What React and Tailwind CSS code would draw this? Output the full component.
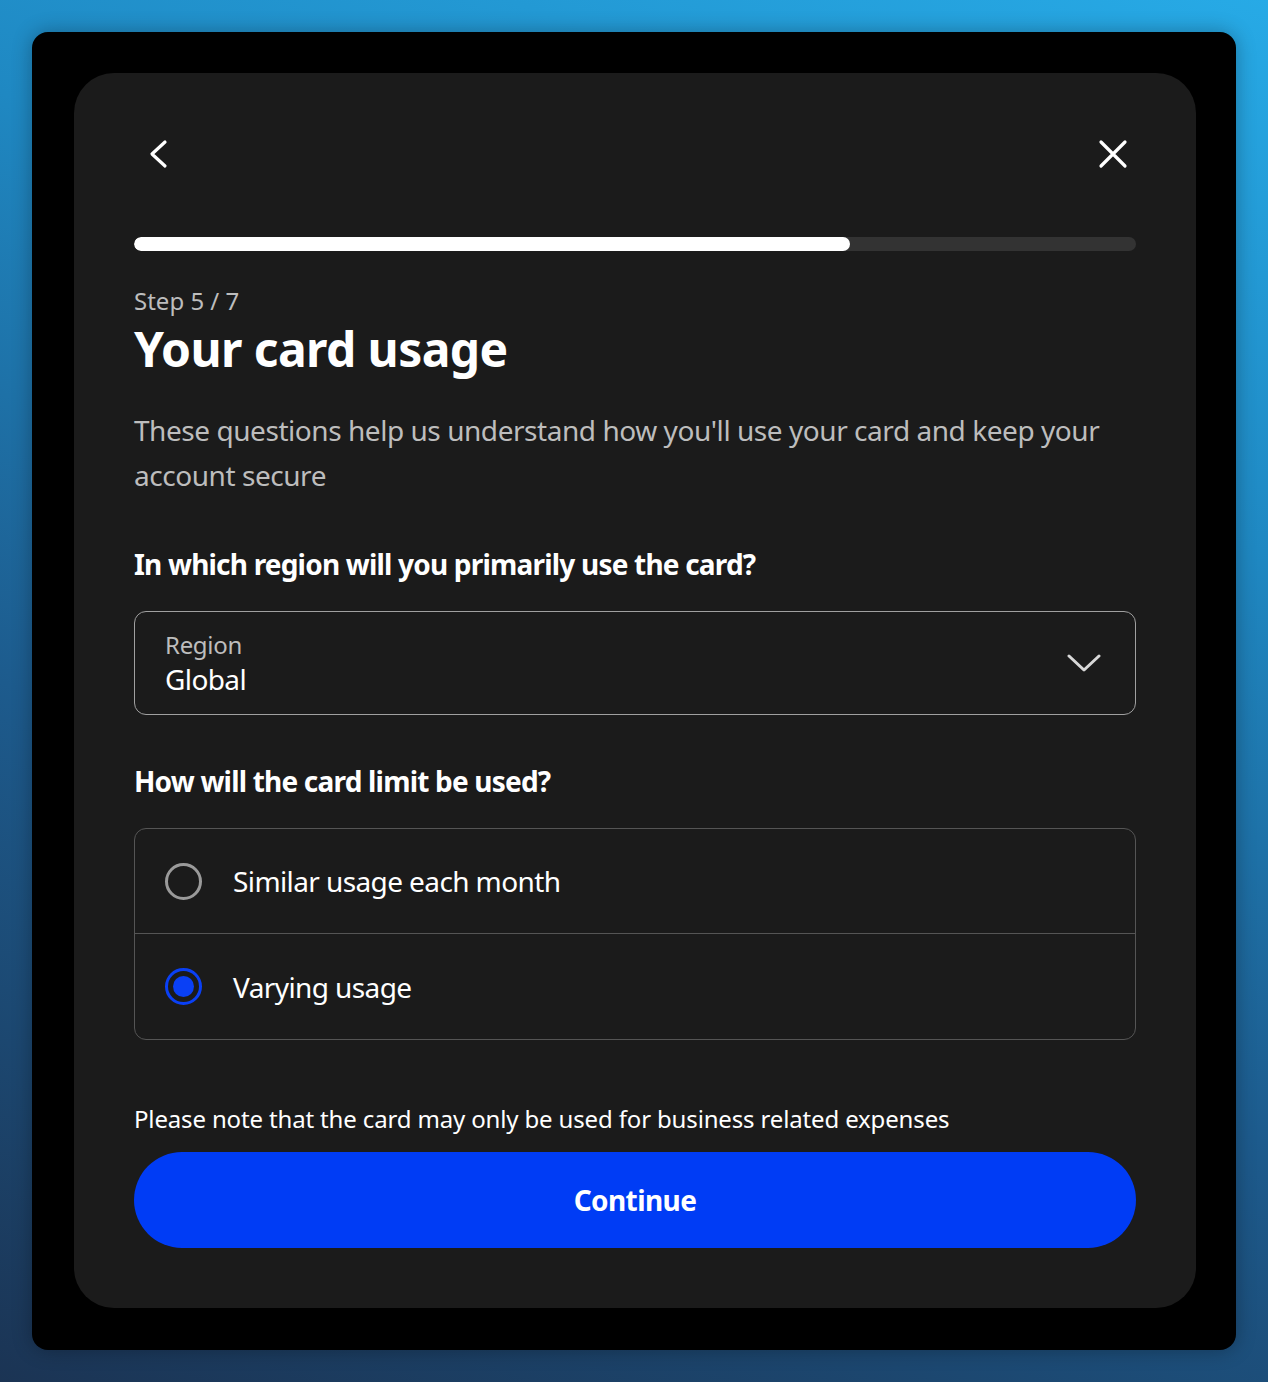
import React from "react";

export default function App() {
  return (
    <div
      className="w-[1268px] h-[1382px] p-8 bg-[linear-gradient(200deg,#27aae6_0%,#1f88c2_30%,#1d5b8d_62%,#1b3454_100%)]"
      style={{ fontFamily: '"Noto Sans", "Open Sans", sans-serif' }}
    >
      <div className="w-full h-full bg-black rounded-[16px] pl-[42px] pr-[40px] pt-[41px] pb-[42px] shadow-[0_0_20px_rgba(0,0,0,0.3)]">
        <div className="w-full h-full bg-[#1b1b1b] rounded-[40px] px-[60px] pt-[64px] flex flex-col">
          <div className="flex items-center justify-between h-[34px]">
            <svg width="20" height="30" viewBox="0 0 20 30" className="ml-[14px]">
              <path d="M17 3 L4 15 L17 27" fill="none" stroke="white" strokeWidth="3.2" strokeLinecap="round" strokeLinejoin="round" />
            </svg>
            <svg width="30" height="30" viewBox="0 0 30 30" className="mr-[8px]">
              <path d="M3 3 L27 27 M27 3 L3 27" fill="none" stroke="white" strokeWidth="3.2" strokeLinecap="round" />
            </svg>
          </div>
          <div className="mt-[66px] h-[14px] w-full rounded-full bg-[#333333] overflow-hidden">
            <div className="h-full bg-white rounded-full" style={{ width: `${(5 / 7) * 100}%` }} />
          </div>
          <div className="mt-[34px] text-[24px] leading-[32px] text-[#bdbdbd]">Step 5 / 7</div>
          <h1 className="text-[48px] leading-[56px] font-bold text-white mt-[4px] tracking-[-0.6px]">Your card usage</h1>
          <p className="mt-[31px] text-[28px] leading-[45px] text-[#bdbdbd] tracking-[-0.45px]">
            These questions help us understand how you'll use your card and keep your account secure
          </p>
          <h2 className="mt-[46px] text-[28px] leading-[40px] font-bold text-white tracking-[-0.8px]">
            In which region will you primarily use the card?
          </h2>
          <div className="mt-[27px] h-[104px] rounded-[12px] border border-[#a0a0a0] flex items-center justify-between pl-[30px] pr-[34px]">
            <div className="flex flex-col">
              <span className="text-[24px] leading-[32px] text-[#bdbdbd] tracking-[-0.3px]">Region</span>
              <span className="text-[28px] leading-[36px] text-white tracking-[-0.6px]">Global</span>
            </div>
            <svg width="34" height="20" viewBox="0 0 34 20">
              <path d="M2 3 L17 17 L32 3" fill="none" stroke="#d8d8d8" strokeWidth="3" strokeLinecap="round" strokeLinejoin="round" />
            </svg>
          </div>
          <h2 className="mt-[46px] text-[28px] leading-[40px] font-bold text-white tracking-[-0.8px]">
            How will the card limit be used?
          </h2>
          <div className="mt-[27px] rounded-[12px] border border-[#555555] flex flex-col">
            <div className="h-[105px] flex items-center pl-[30px] gap-[31px] border-b border-[#555555]">
              <span className="w-[37px] h-[37px] rounded-full border-[3px] border-[#9a9a9a] shrink-0" />
              <span className="text-[28px] leading-[36px] text-white tracking-[-0.6px]">Similar usage each month</span>
            </div>
            <div className="h-[105px] flex items-center pl-[30px] gap-[31px]">
              <span className="w-[37px] h-[37px] rounded-full border-[3px] border-[#0a40f5] shrink-0 flex items-center justify-center">
                <span className="w-[21px] h-[21px] rounded-full bg-[#0a40f5]" />
              </span>
              <span className="text-[28px] leading-[36px] text-white tracking-[-0.6px]">Varying usage</span>
            </div>
          </div>
          <p className="mt-[63px] text-[24px] leading-[32px] text-white tracking-[-0.15px]">
            Please note that the card may only be used for business related expenses
          </p>
          <button className="mt-[17px] h-[96px] w-full rounded-full bg-[#003cf5] text-white text-[28px] font-bold tracking-[-0.6px]">
            Continue
          </button>
        </div>
      </div>
    </div>
  );
}
